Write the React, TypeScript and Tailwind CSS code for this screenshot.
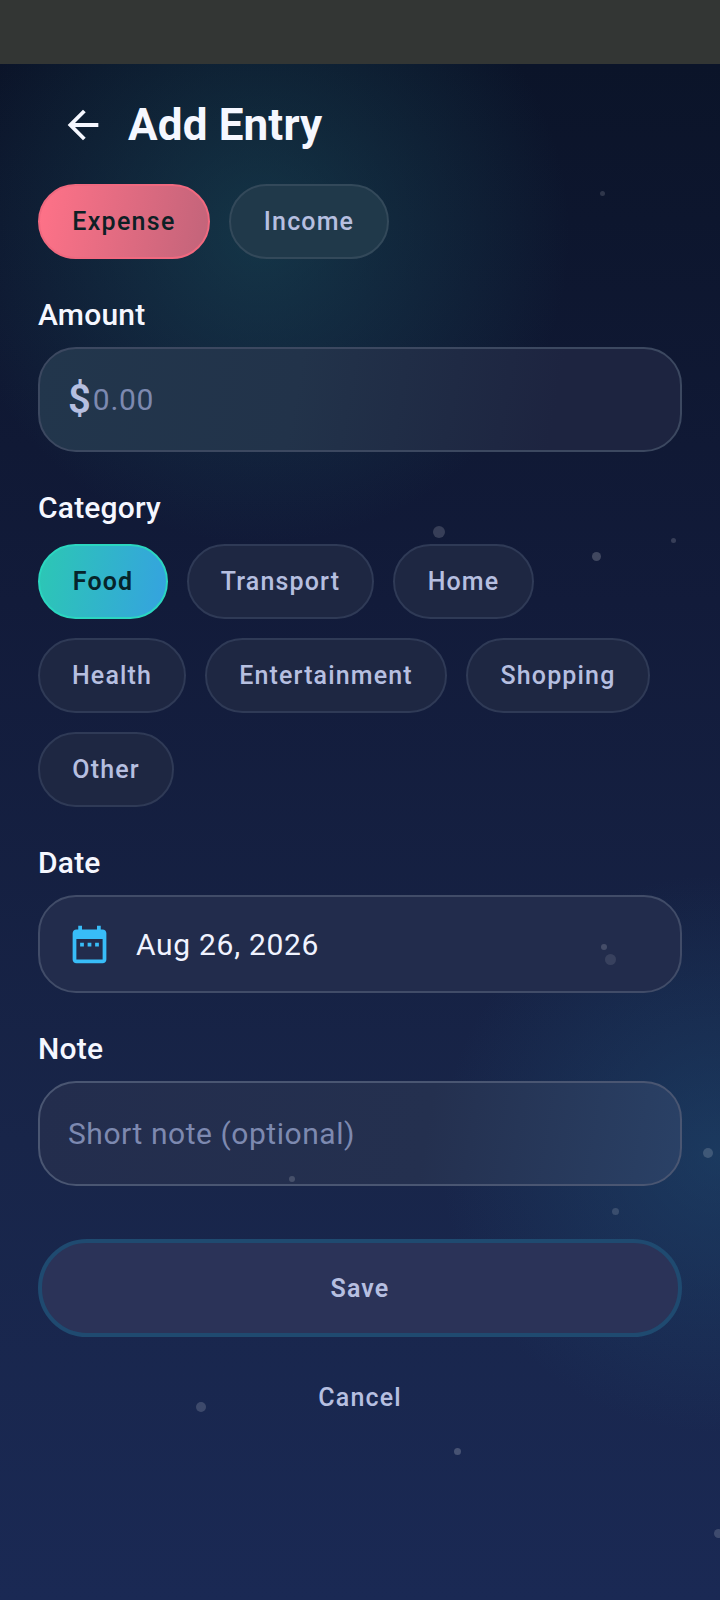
import React from "react";

const dots: [number, number, number, number][] = [
  [602, 193, 5, 0.14],
  [439, 532, 12, 0.16],
  [596, 556, 9, 0.2],
  [673, 540, 5, 0.16],
  [604, 947, 6, 0.16],
  [610, 959, 11, 0.1],
  [708, 1153, 10, 0.16],
  [292, 1179, 6, 0.16],
  [615, 1211, 7, 0.14],
  [201, 1407, 10, 0.16],
  [457, 1451, 7, 0.2],
  [718, 1533, 9, 0.16],
];

const chipBase =
  "h-[75px] pt-[1px] rounded-full border-2 border-[#2f3a56] bg-[#1e2742] text-[25px] font-medium tracking-[1.15px] text-[#b6bfe0] flex items-center justify-center";

function Chip({ label, w }: { label: string; w: string }) {
  return <div className={`${chipBase} ${w}`}>{label}</div>;
}

function Label({ children, className }: { children: React.ReactNode; className: string }) {
  return (
    <div className={`h-[36px] leading-[36px] text-[30px] font-medium tracking-[0.2px] text-[#f5f7ff] ${className}`}>
      {children}
    </div>
  );
}

export default function App() {
  return (
    <div className="relative w-[720px] h-[1600px] overflow-hidden font-['Roboto',sans-serif] bg-[#121b38]">
      <div className="h-[64px] bg-[#333634]" />
      <div className="relative h-[1536px] bg-[linear-gradient(180deg,#0b1429_0%,#121b3a_35%,#182549_70%,#1a2954_100%)]">
        <div className="absolute inset-0 bg-[radial-gradient(circle_310px_at_260px_170px,rgba(30,95,105,0.42),rgba(30,95,105,0)_100%)]" />
        <div className="absolute inset-0 bg-[radial-gradient(circle_280px_at_720px_1090px,rgba(32,90,130,0.38),rgba(32,90,130,0)_100%)]" />
        <div className="relative flex flex-col px-[38px]">
          <div className="flex items-center h-[92px] mt-[15px]">
            <svg className="ml-[22px] w-[46px] h-[46px] text-[#f5f7ff]" viewBox="0 0 24 24" fill="currentColor">
              <path d="M20 11H7.83l5.59-5.59L12 4l-8 8 8 8 1.41-1.41L7.83 13H20v-2z" />
            </svg>
            <div className="ml-[22px] text-[44px] leading-[52px] font-bold tracking-[0.15px] text-[#f5f7ff]">Add Entry</div>
          </div>

          <div className="flex gap-[19px] mt-[13px]">
            <div className="h-[75px] w-[172px] pt-[1px] rounded-full border-2 border-[#f0697f] bg-[linear-gradient(100deg,#ff7288,#c2647a)] text-[25px] font-medium tracking-[1.3px] text-[#0d2025] flex items-center justify-center">
              Expense
            </div>
            <div className="h-[75px] w-[160px] pt-[1px] rounded-full border-2 border-[#33495a] bg-[#20394a] text-[25px] font-medium tracking-[1.15px] text-[#b6bfe0] flex items-center justify-center">
              Income
            </div>
          </div>

          <Label className="mt-[38px]">Amount</Label>
          <div className="mt-[14px] h-[105px] rounded-[38px] border-2 border-[#3c4860] bg-[linear-gradient(100deg,#22364c,#22334a_40%,#1d2440_80%)] flex items-center pl-[28px]">
            <span className="text-[40px] font-semibold text-[#b6bfe0]">$</span>
            <span className="ml-[2px] text-[30px] tracking-[0.7px] text-[#7d89b0]">0.00</span>
          </div>

          <Label className="mt-[38px]">Category</Label>
          <div className="mt-[18px] flex flex-wrap gap-[19px] w-[644px]">
            <div className="h-[75px] w-[130px] pt-[1px] rounded-full border-2 border-[#2bd6c0] bg-[linear-gradient(100deg,#2cc7b4,#35a2e0)] text-[25px] font-semibold tracking-[1.15px] text-[#06242a] flex items-center justify-center">
              Food
            </div>
            <Chip label="Transport" w="w-[187px]" />
            <Chip label="Home" w="w-[141px]" />
            <Chip label="Health" w="w-[148px]" />
            <Chip label="Entertainment" w="w-[242px]" />
            <Chip label="Shopping" w="w-[184px]" />
            <Chip label="Other" w="w-[136px]" />
          </div>

          <Label className="mt-[38px]">Date</Label>
          <div className="mt-[14px] h-[98px] rounded-[38px] border-2 border-[#414c68] bg-[#222c4c] flex items-center pl-[27px]">
            <svg className="w-[45px] h-[45px] text-[#38bdf8]" viewBox="0 0 24 24" fill="currentColor">
              <path d="M9 11H7v2h2v-2zm4 0h-2v2h2v-2zm4 0h-2v2h2v-2zm2-7h-1V2h-2v2H8V2H6v2H5c-1.11 0-1.99.9-1.99 2L3 20c0 1.1.89 2 2 2h14c1.1 0 2-.9 2-2V6c0-1.1-.9-2-2-2zm0 16H5V9h14v11z" />
            </svg>
            <span className="ml-[24px] text-[30px] tracking-[0.7px] text-[#f0f3ff]">Aug 26, 2026</span>
          </div>

          <Label className="mt-[38px]">Note</Label>
          <div className="mt-[14px] h-[105px] rounded-[38px] border-2 border-[#4a5672] bg-[linear-gradient(100deg,#232d4d,#24304f_60%,#2a4166)] flex items-center pl-[28px]">
            <span className="text-[30px] tracking-[0.55px] text-[#7d89b0]">Short note (optional)</span>
          </div>

          <div className="mt-[53px] h-[98px] pt-[1px] rounded-full border-[4px] border-[#1f4a70] bg-[#2b3358] text-[25px] font-semibold tracking-[1.15px] text-[#b6bfe0] flex items-center justify-center">
            Save
          </div>
          <div className="mt-[40px] h-[42px] text-[25px] font-medium tracking-[1.15px] text-[#b6bfe0] flex items-center justify-center">
            Cancel
          </div>
        </div>
        {dots.map(([x, y, d, o], i) => (
          <div
            key={i}
            className="absolute rounded-full bg-white"
            style={{ left: x - d / 2, top: y - 64 - d / 2, width: d, height: d, opacity: o }}
          />
        ))}
      </div>
    </div>
  );
}
